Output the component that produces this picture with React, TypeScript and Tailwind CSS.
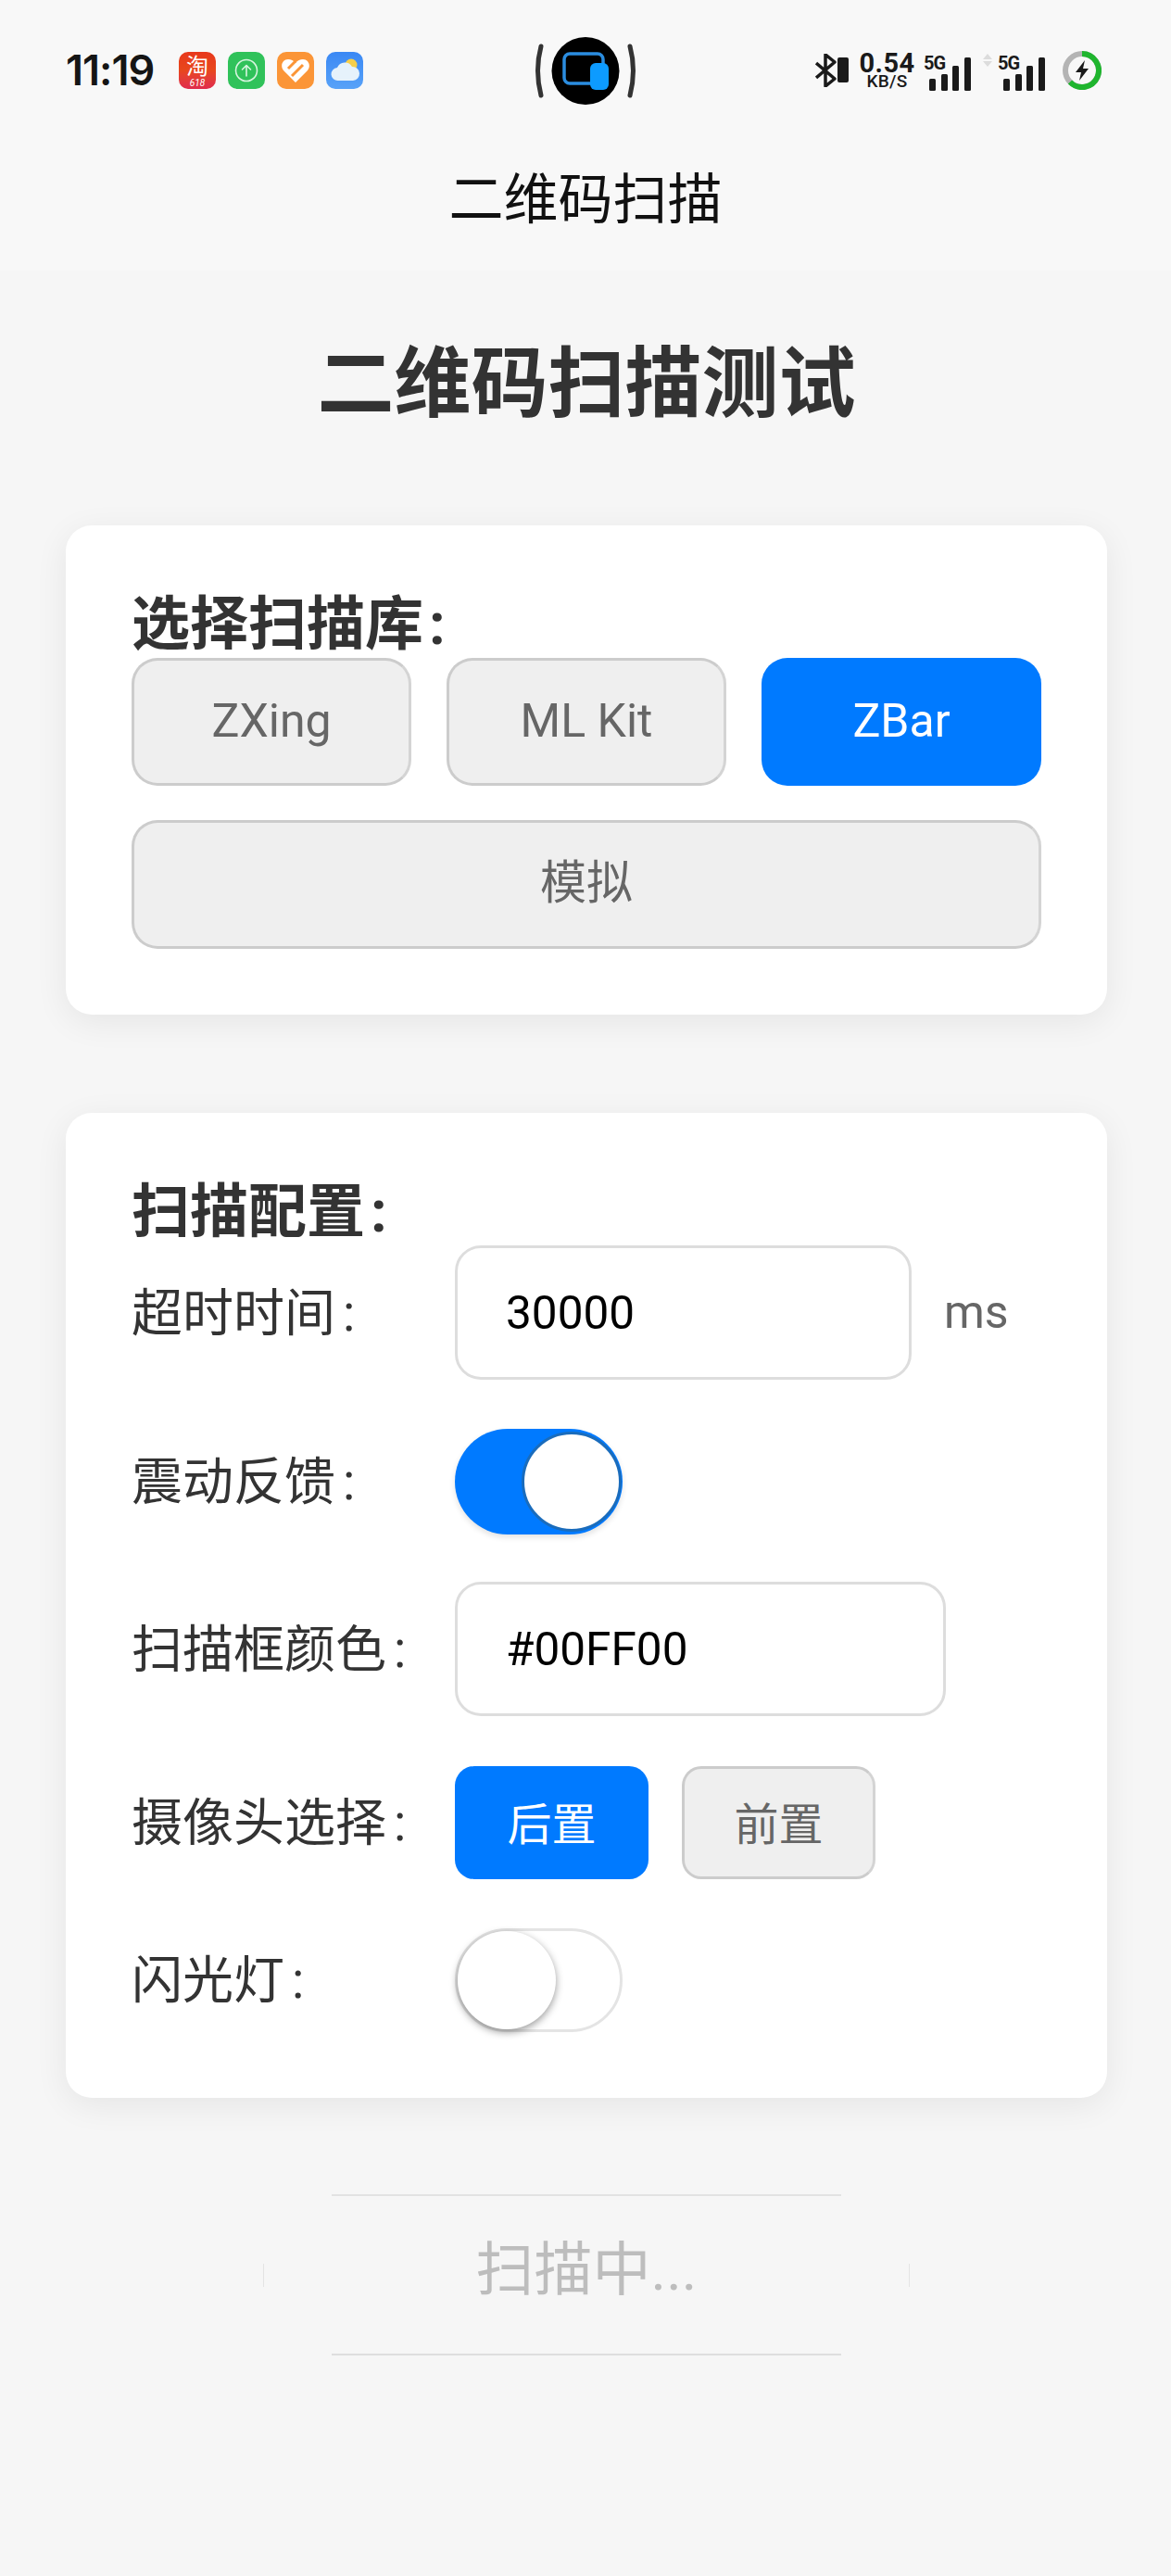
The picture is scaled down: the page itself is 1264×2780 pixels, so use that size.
import React from 'react';

const cjk = 'font-["Roboto","Noto_Sans_CJK_SC",sans-serif]';

const Bars = () => (
  <svg width="46" height="37" viewBox="0 0 46 37" className="block">
    <rect x="0" y="23" width="7" height="13" rx="1.5" fill="#1a1a1a" />
    <rect x="13" y="18" width="7" height="18" rx="1.5" fill="#1a1a1a" />
    <rect x="25" y="9" width="7" height="27" rx="1.5" fill="#1a1a1a" />
    <rect x="38" y="0" width="7" height="36" rx="1.5" fill="#1a1a1a" />
  </svg>
);

const Signal = () => (
  <div className="relative w-[52px] h-[37px]">
    <Bars />
    <span className="absolute left-[-6px] top-[-5px] font-['Roboto'] font-bold text-[20px] leading-[22px] tracking-[-1px] text-[#1a1a1a]">
      5G
    </span>
  </div>
);

const StatusBar = () => (
  <div className="h-[152px] flex items-center pl-[71px]">
    <span className="w-[95px] font-['Inter'] font-semibold text-[45px] leading-[50px] tracking-[-1px] text-[#151515] whitespace-nowrap">11:19</span>
    <div className="ml-[27px] flex gap-[13px]">
      <div className="w-[40px] h-[40px] rounded-[10px] bg-gradient-to-b from-[#e8381c] via-[#e8471c] to-[#e02a4c] flex flex-col items-center">
        <span className="text-[24px] leading-[28px] font-['Noto_Sans_CJK_SC'] text-white">淘</span>
        <span className="text-[10px] leading-[11px] italic text-white font-['Roboto']">618</span>
      </div>
      <div className="w-[40px] h-[40px] rounded-[10px] bg-[#30c25a] flex items-center justify-center">
        <svg width="26" height="26" viewBox="0 0 26 26" fill="none" stroke="#d8f5e0" strokeWidth="1.6" strokeLinecap="round" strokeLinejoin="round">
          <circle cx="13" cy="13" r="11.5" />
          <path d="M13 19V7.5M8.5 12L13 7.5L17.5 12" />
        </svg>
      </div>
      <div className="w-[40px] h-[40px] rounded-[10px] bg-[#fb9537] flex items-center justify-center">
        <svg width="32" height="28" viewBox="0 0 32 28">
          <path d="M16 27L3 14C-1 9 2 2 8 2c3 0 6 1.500 8 4c2-2.500 5-4 8-4c6 0 9 7 5 12Z" fill="#fff" />
          <path d="M8 12L16 4M12 20L24 8" stroke="#fb9537" strokeWidth="3" />
        </svg>
      </div>
      <div className="w-[40px] h-[40px] rounded-[10px] bg-gradient-to-b from-[#3a88f4] to-[#58a2f8] flex items-center justify-center">
        <svg width="34" height="30" viewBox="0 0 34 30">
          <circle cx="24" cy="9" r="6.500" fill="#f6cf4a" />
          <path d="M10 26a7 7 0 0 1-1-14a9 9 0 0 1 16-1a7.500 7.500 0 0 1 1 15Z" fill="#e6f2fb" />
        </svg>
      </div>
    </div>
    <div className="ml-[184px] w-[112px]">
      <svg width="112" height="73" viewBox="0 0 112 73" className="block">
        <path d="M8 10Q1 36 8 63" fill="none" stroke="#333" strokeWidth="5" strokeLinecap="round" />
        <circle cx="56" cy="36.500" r="36.500" fill="#000" />
        <rect x="33" y="18" width="42" height="32" rx="6" fill="none" stroke="#2b8de0" strokeWidth="3.500" />
        <rect x="61" y="28" width="20" height="29" rx="6" fill="#0d9bff" />
        <path d="M104 10Q111 36 104 63" fill="none" stroke="#333" strokeWidth="5" strokeLinecap="round" />
      </svg>
    </div>
    <div className="ml-[192px] flex items-center h-[42px]">
      <svg width="36" height="36" viewBox="0 0 36 36" className="block">
        <path d="M1 10L21 27L11 35V1L21 9L1 26" fill="none" stroke="#1a1a1a" strokeWidth="3.500" strokeLinejoin="round" />
        <rect x="24" y="4" width="12" height="27" rx="2" fill="#1a1a1a" />
      </svg>
      <div className="ml-[12px] w-[59px] flex flex-col items-center text-[#1a1a1a] font-['Roboto']">
        <span className="font-bold text-[29px] leading-[23px] tracking-[0.4px]">0.54</span>
        <span className="font-medium text-[19px] leading-[15px] tracking-[0.3px]">KB/S</span>
      </div>
      <div className="ml-[16px] mt-[8px]"><Signal /></div>
      <svg width="10" height="14" viewBox="0 0 10 14" className="ml-[6px] mb-[22px] block">
        <path d="M5 0L10 6H0ZM5 14L0 8H10Z" fill="#dcdcdc" />
      </svg>
      <div className="ml-[12px] mt-[8px]"><Signal /></div>
      <svg width="42" height="42" viewBox="0 0 42 42" className="ml-[12px] block">
        <circle cx="21" cy="21" r="18" fill="none" stroke="#b4b4b4" strokeWidth="6" />
        <path d="M21 3A18 18 0 1 1 8 33.500" fill="none" stroke="#1fb52e" strokeWidth="6" />
        <path d="M24 10L14 23H20L18 32L28 19H22Z" fill="#1a1a1a" />
      </svg>
    </div>
  </div>
);

const OptionButton = ({ label, active, className }: { label: string; active?: boolean; className: string }) => (
  <button
    className={
      active
        ? `${className} bg-[#007aff] text-white ${cjk}`
        : `${className} bg-[#efefef] text-[#666666] border-[3px] border-t-[#cccccc] border-l-[#cccccc] border-r-[#d4d4d4] border-b-[#cccccc] ${cjk}`
    }
  >
    {label}
  </button>
);

const Toggle = ({ on }: { on?: boolean }) =>
  on ? (
    <div className="w-[181px] h-[114px] rounded-full bg-[#007aff] flex justify-end items-center shadow-[0_3px_6px_rgba(0,0,0,0.12)]">
      <div className="w-[108px] h-[108px] rounded-full bg-white border-[3px] border-[#1a6cbc] mr-[1px] box-border" />
    </div>
  ) : (
    <div className="w-[181px] h-[112px] rounded-full bg-white border-[3px] border-[#e4e4e4] flex items-center">
      <div className="w-[106px] h-[106px] rounded-full bg-white shadow-[0_3px_8px_rgba(0,0,0,0.4)]" />
    </div>
  );

const Label = ({ text }: { text: string }) => (
  <span className={`w-[349px] text-[55px] leading-[72px] text-[#333333] ${cjk}`}>
    {text}
    <span className="ml-[8px]">:</span>
  </span>
);

const Card = ({ title, children }: { title: string; children: React.ReactNode }) => (
  <section className="bg-white rounded-[28px] p-[71px] shadow-[0_8px_36px_rgba(0,0,0,0.07)]">
    <h2 className={`h-[72px] text-[63px] leading-[72px] font-bold text-[#333333] ${cjk}`}>
      {title}
      <span className="ml-[6px]">:</span>
    </h2>
    {children}
  </section>
);

export default function App() {
  return (
    <div className="w-[1264px] h-[2780px] bg-[#f6f6f6] overflow-hidden">
      <header className="h-[292px] bg-[#f8f8f8]">
        <StatusBar />
        <h1 className={`h-[128px] flex items-center justify-center text-[59px] font-normal text-[#111111] ${cjk}`}>二维码扫描</h1>
      </header>

      <main className="pl-[71px] pr-[69px]">
        <div className={`pt-[73px] pb-[102px] text-center text-[83px] leading-[100px] font-bold text-[#333333] ${cjk}`}>二维码扫描测试</div>

        <Card title="选择扫描库">
          <div className="grid grid-cols-3 gap-[38px]">
            <OptionButton label="ZXing" className="h-[138px] pb-[2px] rounded-[28px] text-[50px]" />
            <OptionButton label="ML Kit" className="h-[138px] pb-[2px] rounded-[28px] text-[50px]" />
            <OptionButton label="ZBar" active className="h-[138px] pb-[2px] rounded-[28px] text-[50px]" />
          </div>
          <OptionButton label="模拟" className="w-full h-[139px] mt-[37px] pb-[2px] rounded-[28px] text-[50px]" />
        </Card>

        <div className="h-[106px]" />

        <Card title="扫描配置">
          <div className="flex items-center h-[145px]">
            <Label text="超时时间" />
            <input readOnly value="30000" className={`w-[493px] h-[145px] rounded-[28px] border-[3px] border-[#dddddd] bg-white px-[52px] text-[49.5px] text-black outline-none ${cjk}`} />
            <span className={`ml-[35px] text-[50px] text-[#666666] ${cjk}`}>ms</span>
          </div>
          <div className="flex items-center mt-[53px] h-[114px]">
            <Label text="震动反馈" />
            <Toggle on />
          </div>
          <div className="flex items-center mt-[51px] h-[145px]">
            <Label text="扫描框颜色" />
            <input readOnly value="#00FF00" className={`w-[530px] h-[145px] rounded-[28px] border-[3px] border-[#dddddd] bg-white px-[52px] text-[49.5px] text-black outline-none ${cjk}`} />
          </div>
          <div className="flex items-center mt-[54px] h-[122px]">
            <Label text="摄像头选择" />
            <OptionButton label="后置" active className="w-[209px] h-[122px] pt-[6px] rounded-[21px] text-[48px]" />
            <OptionButton label="前置" className="w-[209px] h-[122px] ml-[36px] pt-[6px] rounded-[21px] text-[48px]" />
          </div>
          <div className="flex items-center mt-[53px] h-[112px]">
            <Label text="闪光灯" />
            <Toggle />
          </div>
        </Card>

        <div className="mt-[104px] mx-auto w-[698px] h-[174px] flex flex-col justify-between">
          <div className="mx-[74px] h-[2px] bg-[#e2e2e2]" />
          <div className="flex items-center justify-between">
            <div className="w-[1px] h-[25px] bg-[#e4e4e4]" />
            <span className={`pb-[10px] text-[63px] leading-[80px] text-[#bdbdbd] ${cjk}`}>扫描中...</span>
            <div className="w-[1px] h-[25px] bg-[#e4e4e4]" />
          </div>
          <div className="mx-[74px] h-[2px] bg-[#dedede]" />
        </div>
      </main>
    </div>
  );
}
